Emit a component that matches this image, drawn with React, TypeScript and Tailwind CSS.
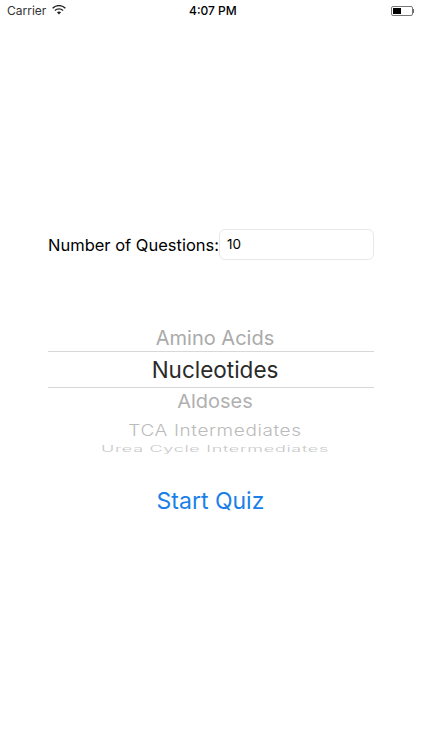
import React from "react";

const App = () => {
  return (
    <div className="w-[422px] h-[750px] bg-white overflow-hidden flex flex-col font-['Inter','Liberation_Sans',sans-serif] text-black">
      {/* status bar */}
      <div className="h-[22px] flex items-center justify-between pl-[7px] pr-[8px] relative text-[12px] leading-none">
        <div className="flex items-center gap-[6px] text-[#333]">
          <span>Carrier</span>
          <svg width="14" height="10" viewBox="0 0 14 10" className="-mt-[3px]">
            <path d="M0.6 3.2 A9.2 9.2 0 0 1 13.4 3.2" fill="none" stroke="#222" strokeWidth="1.4" />
            <path d="M2.9 5.5 A6 6 0 0 1 11.1 5.5" fill="none" stroke="#222" strokeWidth="1.4" />
            <path d="M4.9 7.3 A3.2 3.2 0 0 1 9.1 7.3 L7 9.6 Z" fill="#222" />
          </svg>
        </div>
        <span className="absolute left-[189px] top-[5px] text-[12px] font-medium">4:07 PM</span>
        <div className="flex items-center">
          <div className="w-[22px] h-[10px] border border-[#777] rounded-[2px] p-[1px]">
            <div className="w-[8px] h-full bg-black" />
          </div>
          <div className="w-[1px] h-[4px] bg-[#666]" />
        </div>
      </div>

      {/* questions row */}
      <div className="mt-[207px] ml-[48px] flex items-center">
        <span className="text-[16.5px] leading-none w-[171px] whitespace-nowrap pt-[1px]">Number of Questions:</span>
        <div className="w-[155px] h-[31px] border border-[#e8e8e8] rounded-[6px] pl-[7px] flex items-center text-[13.5px]">
          10
        </div>
      </div>

      {/* picker */}
      <div className="mt-[65px] mx-[48px] w-[326px] flex flex-col items-center text-center">
        <div className="h-[26px] pl-[8px] flex items-center text-[20px] text-[#aaaaaa]">Amino Acids</div>
        <div className="w-full h-[37px] pl-[8px] pt-[1px] border-y border-[#d8d8d8] flex items-center justify-center text-[22.5px] text-[#2a2a2a]">
          Nucleotides
        </div>
        <div className="h-[26px] pl-[8px] flex items-center text-[20px] text-[#b0b0b0] scale-y-95">Aldoses</div>
        <div className="mt-[5px] h-[24px] pl-[8px] flex items-center text-[19px] tracking-[0.6px] text-[#bbbbbb] font-light scale-y-[0.8]">TCA Intermediates</div>
        <div className="h-[11px] pl-[8px] flex items-center text-[18px] tracking-[0.7px] text-[#c8c8c8] font-light scale-y-50">Urea Cycle Intermediates</div>
      </div>

      {/* start button */}
      <div className="mt-[31px] w-[422px] pr-[1px] text-center text-[23px] leading-[32px] text-[#1a7fe8]">Start Quiz</div>
    </div>
  );
};

export default App;
